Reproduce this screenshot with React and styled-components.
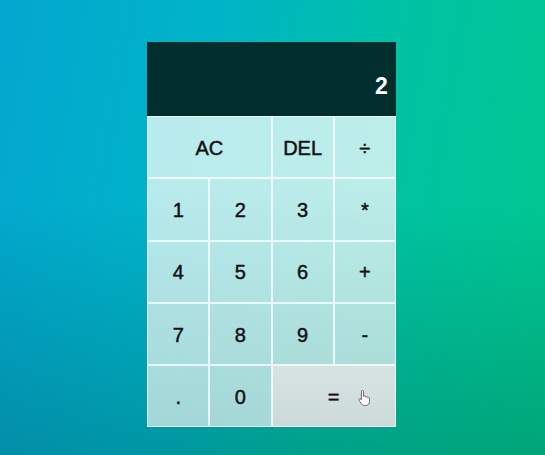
import React from "react";
import styled, { createGlobalStyle } from "styled-components";

const Global = createGlobalStyle`
  html, body { margin: 0; padding: 0; }
  body {
    width: 545px;
    height: 455px;
    overflow: hidden;
    font-family: "Liberation Sans", Arial, sans-serif;
  }
  * { box-sizing: border-box; }
`;

const Page = styled.div`
  width: 545px;
  height: 455px;
  display: flex;
  justify-content: center;
  align-items: flex-start;
  padding-top: 42px;
  padding-right: 2px;
  background:
    linear-gradient(to bottom, rgba(0, 40, 40, 0) 45%, rgba(0, 40, 40, 0.22) 100%),
    linear-gradient(100deg, #03a6cf 0%, #00b4c8 35%, #00c2a4 65%, #00c88e 100%);
`;

const Grid = styled.div`
  display: grid;
  grid-template-columns: repeat(4, 62.2px);
  grid-template-rows: 74px repeat(5, 62.3px);
  background:
    linear-gradient(to bottom, rgba(0, 60, 60, 0) 35%, rgba(0, 60, 60, 0.12) 100%),
    linear-gradient(100deg, #b9ebef 0%, #bdeee8 100%);
`;

const Display = styled.div`
  grid-column: 1 / -1;
  background: #022f2d;
  display: flex;
  align-items: flex-end;
  justify-content: flex-end;
  padding: 0 8px 18px;
  color: #fff;
  font-size: 23px;
  font-weight: 700;
  line-height: 1;
`;

const Key = styled.button`
  position: relative;
  grid-column: span ${(p) => p.$span || 1};
  border: 1px solid rgba(255, 255, 255, 0.75);
  margin: 0;
  padding: 0;
  padding-top: 2px;
  background: ${(p) => (p.$hover ? "linear-gradient(#d7e3e2, #cbdad8)" : "transparent")};
  font-family: "Liberation Sans", Arial, sans-serif;
  font-size: 20px;
  font-weight: 400;
  -webkit-text-stroke: 0.45px #111;
  color: #111;
  display: flex;
  align-items: center;
  justify-content: center;
  cursor: pointer;
`;

const Pointer = styled.svg`
  position: absolute;
  left: 84px;
  top: 23px;
  width: 14px;
  height: 18px;
`;

const keys = [
  { l: "AC", span: 2 },
  { l: "DEL" },
  { l: "÷" },
  { l: "1" }, { l: "2" }, { l: "3" }, { l: "*" },
  { l: "4" }, { l: "5" }, { l: "6" }, { l: "+" },
  { l: "7" }, { l: "8" }, { l: "9" }, { l: "-" },
  { l: "." }, { l: "0" },
  { l: "=", span: 2, hover: true },
];

export default function App() {
  return (
    <>
      <Global />
      <Page>
        <Grid>
          <Display>2</Display>
          {keys.map((k) => (
            <Key key={k.l} $span={k.span} $hover={k.hover}>
              {k.l}
              {k.hover && (
                <Pointer viewBox="0 0 16 20">
                  <path
                    d="M5 2.6a1.2 1.2 0 0 1 2.4 0V8.2l.3-.1a1.2 1.2 0 0 1 2.2.5v.3a1.2 1.2 0 0 1 2.2.5v.5a1.2 1.2 0 0 1 2.2.6V14c0 2.5-1.8 4.6-4.3 4.6H8.6c-1.4 0-2.6-.7-3.4-1.8L2.4 12.7a1.2 1.2 0 0 1 1.9-1.5L5 12.1Z"
                    fill="#fff"
                    stroke="#555"
                    strokeWidth="1"
                    strokeLinejoin="round"
                  />
                </Pointer>
              )}
            </Key>
          ))}
        </Grid>
      </Page>
    </>
  );
}
